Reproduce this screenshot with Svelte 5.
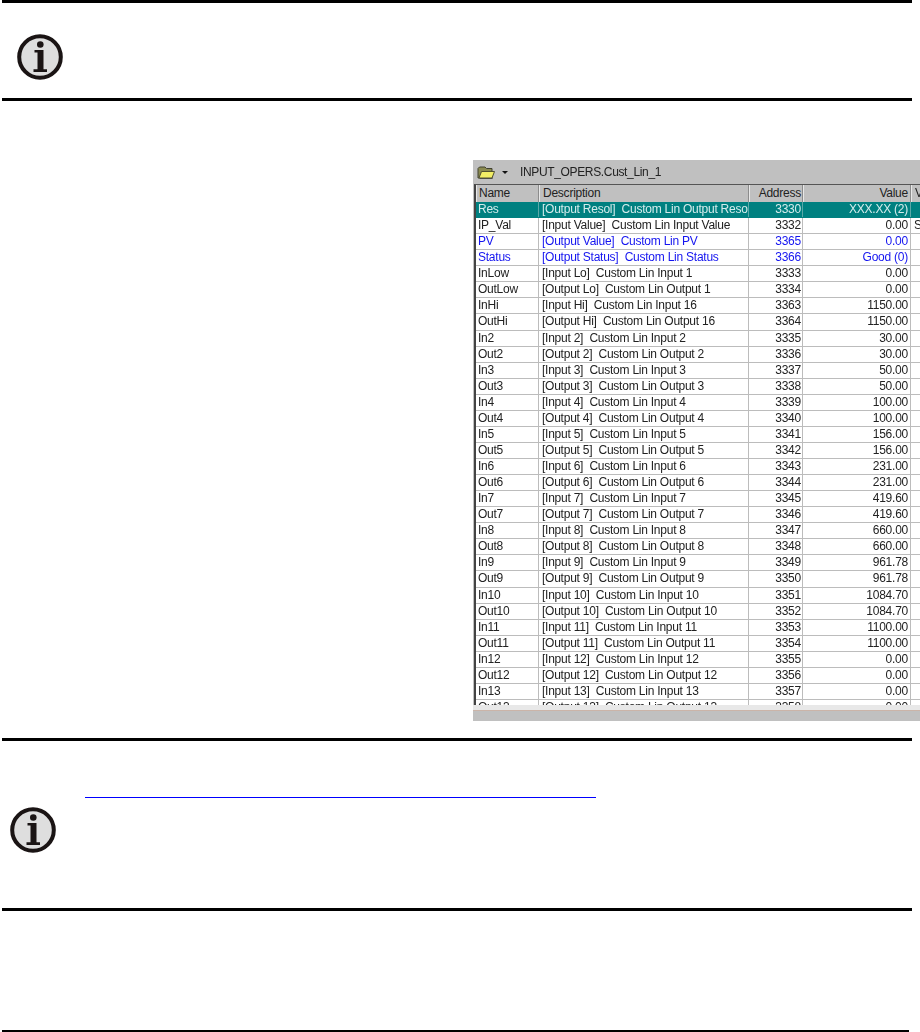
<script>
	const head = [
		['Res', '[Output Resol]  Custom Lin Output Resolution', 3330, 'XXX.XX (2)', '', 'sel'],
		['IP_Val', '[Input Value]  Custom Lin Input Value', 3332, '0.00', 'S', ''],
		['PV', '[Output Value]  Custom Lin PV', 3365, '0.00', '', 'blue'],
		['Status', '[Output Status]  Custom Lin Status', 3366, 'Good (0)', '', 'blue'],
		['InLow', '[Input Lo]  Custom Lin Input 1', 3333, '0.00', '', ''],
		['OutLow', '[Output Lo]  Custom Lin Output 1', 3334, '0.00', '', ''],
		['InHi', '[Input Hi]  Custom Lin Input 16', 3363, '1150.00', '', ''],
		['OutHi', '[Output Hi]  Custom Lin Output 16', 3364, '1150.00', '', '']
	];
	const points = [
		[2, 3335, '30.00'],
		[3, 3337, '50.00'],
		[4, 3339, '100.00'],
		[5, 3341, '156.00'],
		[6, 3343, '231.00'],
		[7, 3345, '419.60'],
		[8, 3347, '660.00'],
		[9, 3349, '961.78'],
		[10, 3351, '1084.70'],
		[11, 3353, '1100.00'],
		[12, 3355, '0.00']
	];
	const rows = [...head];
	for (const [n, addr, val] of points) {
		rows.push([`In${n}`, `[Input ${n}]  Custom Lin Input ${n}`, addr, val, '', '']);
		rows.push([`Out${n}`, `[Output ${n}]  Custom Lin Output ${n}`, addr + 1, val, '', '']);
	}
	rows.push(['In13', '[Input 13]  Custom Lin Input 13', 3357, '0.00', '', '']);
	rows.push(['Out13', '[Output 13]  Custom Lin Output 13', 3358, '0.00', '', '']);
</script>

{#snippet infoIcon()}
	<svg class="icon" viewBox="0 0 46 46" width="46" height="46" aria-hidden="true">
		<circle cx="23" cy="23" r="20.8" fill="#dedede" stroke="#1a1414" stroke-width="4" />
		<circle cx="23.3" cy="10.5" r="3.3" fill="#1a1414" />
		<path d="M17.5 16h9v19.2h3.5v2.8H16.5v-2.8h4V18.6h-3z" fill="#1a1414" />
	</svg>
{/snippet}

<div class="page">
	<section class="note first">
		{@render infoIcon()}
	</section>

	<div class="window">
		<div class="toolbar">
			<svg class="folder" viewBox="0 0 18 13" width="18" height="13" aria-hidden="true">
				<path d="M1 2.5 2.5 1H8l1.5 1.5H15V12H1z" fill="#8a8a50" stroke="#404030" />
				<path d="M2 12 4.5 5.5H17.5L15 12z" fill="#f2ee66" stroke="#505030" />
				<path d="M3 13h13" stroke="#333" />
			</svg>
			<span class="caret"></span>
			<span class="path">INPUT_OPERS.Cust_Lin_1</span>
		</div>
		<div class="grid">
			<div class="row header">
				<div class="c name">Name</div>
				<div class="c desc">Description</div>
				<div class="c addr">Address</div>
				<div class="c val">Value</div>
				<div class="c extra">V</div>
			</div>
			{#each rows as [name, desc, addr, val, extra, kind]}
				<div class="row {kind}">
					<div class="c name">{name}</div>
					<div class="c desc">{desc}</div>
					<div class="c addr">{addr}</div>
					<div class="c val">{val}</div>
					<div class="c extra">{extra}</div>
				</div>
			{/each}
		</div>
		<div class="hscroll"></div>
	</div>

	<section class="note second">
		{@render infoIcon()}
		<div class="link-line"></div>
	</section>

	<div class="footer"></div>
</div>

<style>
	:global(body) {
		background: #fff;
	}
	.page {
		width: 920px;
		height: 1032px;
		padding-left: 2px;
		padding-right: 8px;
		box-sizing: border-box;
		overflow: hidden;
		display: flex;
		flex-direction: column;
	}
	.note {
		flex: none;
		box-sizing: border-box;
		border-bottom: 3px solid #000;
		display: flex;
	}
	.first {
		height: 101px;
		border-top: 3px solid #000;
		padding: 31px 0 0 15px;
	}
	.second {
		height: 173px;
		margin-top: 17px;
		border-top: 3px solid #000;
		padding-top: 66px;
		padding-left: 8px;
		position: relative;
	}
	.icon {
		display: block;
	}
	.link-line {
		position: absolute;
		left: 83px;
		top: 56px;
		width: 511px;
		height: 1px;
		background: #0000ff;
	}
	.window {
		flex: none;
		width: 447px;
		height: 561px;
		margin-top: 59px;
		margin-left: 471px;
		background: #c0c0c0;
		overflow: hidden;
		display: flex;
		flex-direction: column;
		font-family: 'Liberation Sans', Arial, sans-serif;
		font-size: 12px;
		letter-spacing: -0.24px;
		color: #222;
	}
	.toolbar {
		flex: none;
		height: 24px;
		display: flex;
		align-items: center;
		padding-left: 4px;
		filter: blur(0.3px);
	}
	.folder {
		flex: none;
	}
	.caret {
		width: 0;
		height: 0;
		margin-left: 7px;
		border-left: 3px solid transparent;
		border-right: 3px solid transparent;
		border-top: 3px solid #111;
	}
	.path {
		margin-left: 12px;
		letter-spacing: -0.35px;
		white-space: pre;
	}
	.grid {
		flex: none;
		height: 521px;
		margin-left: 1px;
		overflow: hidden;
		background: #fff;
		border-top: 1px solid #555;
		border-left: 2px solid #444;
		box-sizing: border-box;
	}
	.row {
		display: flex;
		height: 16.07px;
		box-sizing: border-box;
		border-bottom: 1px solid #bcbcbc;
		line-height: 15px;
		filter: blur(0.25px);
	}
	.c {
		flex: none;
		box-sizing: border-box;
		padding: 0 2px 0 3px;
		overflow: hidden;
		white-space: pre;
		border-right: 1px solid #bcbcbc;
	}
	.name {
		width: 63px;
		padding-left: 2px;
	}
	.desc {
		width: 210px;
	}
	.addr {
		width: 54px;
		padding-right: 1px;
		text-align: right;
	}
	.val {
		width: 108px;
		text-align: right;
	}
	.extra {
		width: 12px;
		padding-left: 3px;
		border-right: none;
	}
	.header {
		height: 17px;
		line-height: 16px;
		background: #c0c0c0;
		border-bottom: none;
	}
	.header .c {
		border-left: 1px solid #e8e8e8;
		border-right: 1px solid #8c8c8c;
		color: #222;
	}
	.sel {
		background: #008080;
		color: #d4ecec;
		border-bottom-color: #008080;
	}
	.sel .c {
		border-right-color: #5aa8a8;
	}
	.blue {
		color: #1414f0;
	}
	.hscroll {
		flex: none;
		height: 16px;
		background: linear-gradient(#e8e8e8 5px, #cbb4a8 5px, #cbb4a8 6px, #c0c0c0 6px);
	}
	.footer {
		margin-top: auto;
		height: 2px;
		width: 907px;
		background: #000;
	}
</style>
